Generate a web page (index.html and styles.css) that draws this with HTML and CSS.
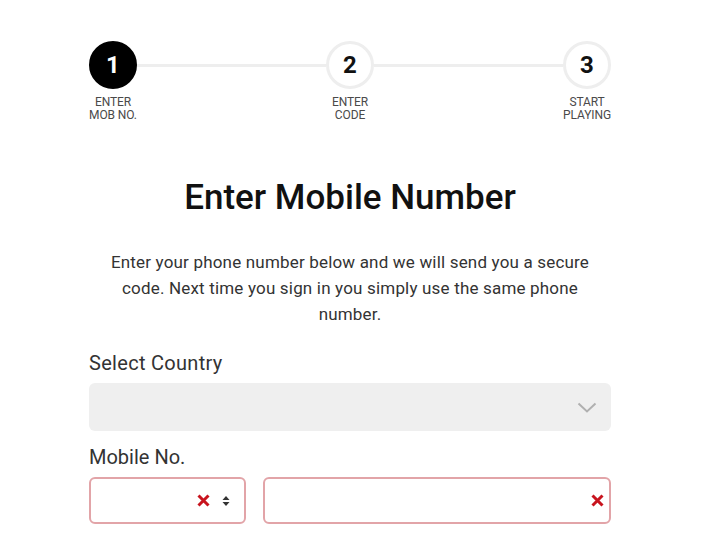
FILE: index.html
```html
<!DOCTYPE html>
<html lang="en">
<head>
<meta charset="utf-8">
<title>Enter Mobile Number</title>
<link rel="stylesheet" href="styles.css">
</head>
<body>
<main class="page">
  <div class="stepper">
    <div class="step">
      <div class="circle active">1</div>
      <div class="step-label">ENTER<br>MOB NO.</div>
    </div>
    <div class="line"></div>
    <div class="step">
      <div class="circle">2</div>
      <div class="step-label">ENTER<br>CODE</div>
    </div>
    <div class="line"></div>
    <div class="step">
      <div class="circle">3</div>
      <div class="step-label">START<br>PLAYING</div>
    </div>
  </div>

  <h1 class="title">Enter Mobile Number</h1>
  <p class="intro">Enter your phone number below and we will send you a secure code. Next time you sign in you simply use the same phone number.</p>

  <label class="field-label">Select Country</label>
  <div class="select">
    <svg class="chevron" width="20" height="11" viewBox="0 0 20 11"><path d="M1.5 1.5 L10 9.5 L18.5 1.5" fill="none" stroke="#b0b0b0" stroke-width="2"/></svg>
  </div>

  <label class="field-label">Mobile No.</label>
  <div class="phone-row">
    <div class="input code-input">
      <svg class="err" width="13" height="13" viewBox="0 0 13 13"><path d="M1.5 1.5 L11.5 11.5 M11.5 1.5 L1.5 11.5" stroke="#c8141e" stroke-width="3"/></svg>
      <svg class="spin" width="8" height="12" viewBox="0 0 8 12"><path d="M0.5 5 L4 1 L7.5 5 Z M0.5 7 L4 11 L7.5 7 Z" fill="#333"/></svg>
    </div>
    <div class="input number-input">
      <svg class="err" width="13" height="13" viewBox="0 0 13 13"><path d="M1.5 1.5 L11.5 11.5 M11.5 1.5 L1.5 11.5" stroke="#c8141e" stroke-width="3"/></svg>
    </div>
  </div>
</main>
</body>
</html>
```
FILE: styles.css
```css
html, body {
  margin: 0;
  padding: 0;
  background: #ffffff;
}
body {
  font-family: Roboto, "Liberation Sans", sans-serif;
  color: #222;
}
.page {
  width: 522px;
  margin-left: 89px;
  padding-top: 41px;
}
.stepper {
  display: flex;
  align-items: flex-start;
}
.step {
  width: 48px;
  display: flex;
  flex-direction: column;
  align-items: center;
}
.circle {
  width: 48px;
  height: 48px;
  box-sizing: border-box;
  border-radius: 50%;
  border: 3px solid #eeeeee;
  display: flex;
  align-items: center;
  justify-content: center;
  font-size: 24px;
  font-weight: 700;
  color: #111;
}
.circle.active {
  background: #000;
  border-color: #000;
  color: #fff;
}
.step-label {
  margin-top: 7px;
  white-space: nowrap;
  text-align: center;
  font-size: 12px;
  line-height: 13px;
  color: #4a4a4a;
  letter-spacing: -0.1px;
}
.line {
  flex: 1;
  height: 3px;
  background: #eeeeee;
  margin-top: 23px;
}
.title {
  margin: 56px 0 0;
  text-align: center;
  font-size: 35px;
  line-height: 40px;
  font-weight: 500;
  color: #111;
}
.intro {
  margin: 31px auto 0;
  width: 500px;
  text-align: center;
  font-size: 17px;
  line-height: 26px;
  letter-spacing: 0.18px;
  color: #333;
}
.field-label {
  display: block;
  font-size: 20px;
  line-height: 24px;
  color: #333;
  margin-top: 24px;
  letter-spacing: 0.3px;
}
.select + .field-label {
  margin-top: 14px;
  letter-spacing: 0;
}
.select {
  margin-top: 8px;
  height: 48px;
  border-radius: 6px;
  background: #efefef;
  display: flex;
  align-items: center;
  justify-content: flex-end;
  padding-right: 14px;
}
.phone-row {
  margin-top: 8px;
  display: flex;
  gap: 17px;
}
.input {
  height: 47px;
  box-sizing: border-box;
  border: 2px solid #e2a4a8;
  border-radius: 6px;
  display: flex;
  align-items: center;
  justify-content: flex-end;
}
.code-input {
  width: 157px;
  padding-right: 14px;
  gap: 12px;
}
.number-input {
  flex: 1;
  padding-right: 5px;
}
```
